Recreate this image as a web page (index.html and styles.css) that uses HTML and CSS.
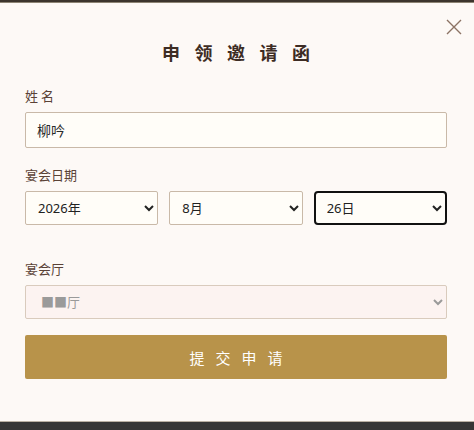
FILE: index.html
```html
<!DOCTYPE html>
<html lang="zh-CN">
<head>
<meta charset="utf-8">
<title>申领邀请函</title>
<link rel="stylesheet" href="styles.css">
</head>
<body>
<div class="backdrop-top"></div>
<div class="modal">
  <button class="close" type="button" aria-label="关闭">
    <svg width="16" height="16" viewBox="0 0 16 16"><path d="M1 1 L15 15 M15 1 L1 15" stroke="#8c7264" stroke-width="1.4" fill="none"/></svg>
  </button>
  <h2 class="title">申领邀请函</h2>
  <form class="form">
    <div class="field">
      <label class="label">姓 名</label>
      <input class="input" type="text" value="柳吟">
    </div>
    <div class="field">
      <label class="label">宴会日期</label>
      <div class="date-row">
        <select class="select"><option>2026年</option></select>
        <select class="select"><option>8月</option></select>
        <select class="select focused"><option>26日</option></select>
      </div>
    </div>
    <div class="field hall">
      <label class="label">宴会厅</label>
      <select class="select wide" disabled><option>■■厅</option></select>
    </div>
    <button class="submit" type="button">提交申请</button>
  </form>
</div>
<div class="backdrop-bottom"></div>
</body>
</html>
```
FILE: styles.css
```css
html, body {
  margin: 0;
  padding: 0;
  background: #363636;
  font-family: "Noto Sans", "Noto Sans CJK SC", sans-serif;
}

.backdrop-top {
  height: 2px;
  background: #3c352d;
}

.modal {
  position: relative;
  background: #fdf9f6;
  border-top: 1px solid #8d8474;
  border-bottom: 1px solid #b9b0a3;
  height: 420px;
  box-sizing: border-box;
  padding: 0 27px 0 25px;
}

.close {
  position: absolute;
  top: 16px;
  right: 12px;
  background: none;
  border: 0;
  padding: 0;
  width: 16px;
  height: 16px;
  cursor: pointer;
}
.close svg { display: block; }

.title {
  margin: 0;
  padding-top: 36px;
  text-align: center;
  font-size: 18px;
  font-weight: 700;
  line-height: 26px;
  letter-spacing: 14.5px;
  text-indent: 14.5px;
  color: #3d2c24;
  font-family: "Noto Sans CJK SC", sans-serif;
}

.form {
  display: flex;
  flex-direction: column;
  margin-top: 22px;
}

.field {
  display: flex;
  flex-direction: column;
  margin-bottom: 18px;
}
.field.hall { margin-top: 17px; margin-bottom: 16px; }

.label {
  font-size: 13px;
  line-height: 18px;
  color: #5a4236;
  margin-bottom: 7px;
  font-family: "Noto Sans CJK SC", sans-serif;
}

.input, .select {
  box-sizing: border-box;
  height: 36px;
  border: 1px solid #c9b9a8;
  border-radius: 2px;
  background: #fffdf8;
  font-family: "Noto Sans", "Noto Sans CJK SC", sans-serif;
  font-size: 14px;
  color: #2a2a2a;
  outline: none;
}

.input {
  width: 100%;
  padding: 0 11px;
}

.date-row {
  display: grid;
  grid-template-columns: 1fr 1fr 1fr;
  gap: 11px;
}

.select {
  height: 34px;
  padding: 0 8px;
  font-size: 13px;
  color: #222;
}

.select.focused {
  border: 2px solid #111;
  border-radius: 4px;
  padding: 0 7px;
}

.select.wide {
  width: 100%;
  background: #fcf3f1;
  border-color: #d9cbbd;
  color: #9a9a9a;
  padding: 0 11px;
  opacity: 1;
}

.submit {
  height: 44px;
  border: 0;
  border-radius: 2px;
  background: #b8934a;
  color: #fff;
  font-family: "Noto Sans CJK SC", sans-serif;
  font-size: 15px;
  letter-spacing: 11px;
  text-indent: 11px;
  cursor: pointer;
}
```
